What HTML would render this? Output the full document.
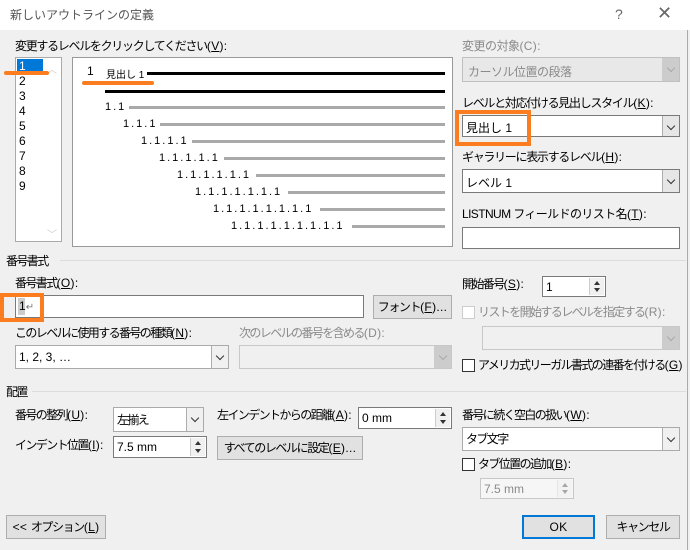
<!DOCTYPE html>
<html><head><meta charset="utf-8"><style>
*{box-sizing:border-box;margin:0;padding:0}
body{width:690px;height:550px;background:#f0f0f0;font-family:"Liberation Sans","Noto Sans CJK JP",sans-serif;font-size:12px;color:#000;position:relative;overflow:hidden}
.a{position:absolute;white-space:nowrap}
.t{line-height:14px;letter-spacing:-1.6px}
.n{letter-spacing:0.3px}
.g{color:#8a8a8a}
.box{position:absolute;background:#fff;border:1px solid #7a7a7a}
.dis{position:absolute;background:#f0f0f0;border:1px solid #c8c8c8}
.dd{position:absolute;right:0;top:0;bottom:0;width:17px;background:#e6e6e6;border-left:1px solid #adadad}
.dd:after{content:"";position:absolute;left:5px;top:7px;width:5px;height:5px;border-right:1px solid #333;border-bottom:1px solid #333;transform:rotate(45deg)}
.dis .dd{background:#ccc;border-left-color:#ccc}
.dis .dd:after{border-color:#aaa}
.btn{position:absolute;background:#e1e1e1;border:1px solid #adadad;text-align:center;white-space:nowrap;letter-spacing:-1.4px}
.spin{position:absolute;right:1px;top:1px;bottom:1px;width:15px;background:#f0f0f0;border-left:1px solid #ccc}
.spin:before{content:"";position:absolute;left:4px;top:3px;border:3px solid transparent;border-bottom:4px solid #333;border-top:0}
.spin:after{content:"";position:absolute;left:4px;bottom:3px;border:3px solid transparent;border-top:4px solid #333;border-bottom:0}
.cb{position:absolute;width:13px;height:13px;background:#fff;border:1px solid #333}
.or{position:absolute;border:4px solid #fb7d20}
.ol{position:absolute;background:#fb7d20;height:4px;border-radius:2px}
.bl{position:absolute;height:3px;background:#000}
.gl{position:absolute;height:3px;background:#a9a9a9;right:245px}
.pv{position:absolute;font-size:11px;line-height:12px;letter-spacing:2px}
</style></head><body>
<div class="a" style="left:0;top:0;width:690px;height:30px;background:#fff"></div>
<div class="a" style="left:10px;top:8px;color:#555;line-height:14px">新しいアウトラインの定義</div>
<div class="a" style="left:615px;top:6px;color:#666;font-size:14px">?</div>
<div class="a" style="left:657px;top:3px;color:#666;font-size:18px">✕</div>
<div class="a" style="left:687px;top:30px;width:1px;height:520px;background:#aaa"></div>

<div class="a t" style="left:15px;top:39px;letter-spacing:-1.3px">変更するレベルをクリックしてください<span class="n">(<u>V</u>):</span></div>
<div class="box" style="left:15px;top:57px;width:47px;height:185px;border-color:#aaa"></div>
<div class="a" style="left:17px;top:59px;width:26px;height:14px;background:#0078d7"></div>
<div class="a" style="left:19px;top:59px;line-height:15px;color:#fff">1</div>
<div class="a" style="left:19px;top:74px;line-height:15px">2<br>3<br>4<br>5<br>6<br>7<br>8<br>9</div>
<div class="a" style="left:47px;top:61px;color:#ccc;font-size:10px">︿</div>
<div class="a" style="left:47px;top:226px;color:#ccc;font-size:10px">﹀</div>

<div class="box" style="left:72px;top:57px;width:381px;height:190px;border-color:#999"></div>
<div class="a" style="left:87px;top:64px;font-size:12px">1</div>
<div class="a" style="left:106px;top:66px;font-size:10px">見出し 1</div>
<div class="bl" style="left:147px;top:72px;width:298px"></div>
<div class="bl" style="left:105px;top:90px;width:340px"></div>
<div class="pv" style="left:105px;top:101px">1.1</div><div class="gl" style="left:129px;top:106px"></div>
<div class="pv" style="left:123px;top:118px">1.1.1</div><div class="gl" style="left:160px;top:123px"></div>
<div class="pv" style="left:141px;top:135px">1.1.1.1</div><div class="gl" style="left:192px;top:140px"></div>
<div class="pv" style="left:159px;top:152px">1.1.1.1.1</div><div class="gl" style="left:224px;top:157px"></div>
<div class="pv" style="left:177px;top:169px">1.1.1.1.1.1</div><div class="gl" style="left:256px;top:174px"></div>
<div class="pv" style="left:195px;top:186px">1.1.1.1.1.1.1</div><div class="gl" style="left:288px;top:191px"></div>
<div class="pv" style="left:213px;top:203px">1.1.1.1.1.1.1.1</div><div class="gl" style="left:320px;top:208px"></div>
<div class="pv" style="left:231px;top:220px">1.1.1.1.1.1.1.1.1</div><div class="gl" style="left:352px;top:225px"></div>
<div class="ol" style="left:4px;top:71px;width:45px"></div>
<div class="ol" style="left:82px;top:81px;width:72px"></div>

<div class="a t g" style="left:462px;top:39px;letter-spacing:-0.5px">変更の対象<span class="n">(C):</span></div>
<div class="dis" style="left:462px;top:57px;width:218px;height:25px;background:#e8e8e8;border-color:#c0c0c0"><span class="a g" style="left:5px;top:5px;letter-spacing:-0.5px">カーソル位置の段落</span><div class="dd"></div></div>
<div class="a t" style="left:462px;top:96px;letter-spacing:-1.3px">レベルと対応付ける見出しスタイル<span class="n">(<u>K</u>):</span></div>
<div class="box" style="left:462px;top:115px;width:218px;height:22px"><span class="a" style="left:3px;top:3px">見出し 1</span><div class="dd"></div></div>
<div class="or" style="left:455px;top:110px;width:76px;height:36px"></div>
<div class="a t" style="left:462px;top:150px;letter-spacing:-1.3px">ギャラリーに表示するレベル<span class="n">(<u>H</u>):</span></div>
<div class="box" style="left:462px;top:169px;width:218px;height:24px"><span class="a" style="left:3px;top:4px">レベル 1</span><div class="dd"></div></div>
<div class="a t" style="left:462px;top:207px;letter-spacing:-0.6px">LISTNUM フィールドのリスト名<span class="n">(<u>T</u>):</span></div>
<div class="box" style="left:462px;top:227px;width:218px;height:22px"></div>

<div class="a t" style="left:6px;top:254px">番号書式</div>
<div class="a" style="left:60px;top:260px;width:626px;height:1px;background:#dcdcdc"></div>
<div class="a t" style="left:15px;top:276px">番号書式<span class="n">(<u>O</u>):</span></div>
<div class="box" style="left:15px;top:295px;width:349px;height:23px"><span class="a" style="left:2px;top:2px;background:#ccc;width:7px;height:17px"></span><span class="a" style="left:3px;top:3px">1<span style="color:#777;font-size:10px">↵</span></span></div>
<div class="or" style="left:0;top:293px;width:44px;height:29px"></div>
<div class="btn" style="left:373px;top:295px;width:79px;height:24px;line-height:22px">フォント<span class="n">(<u>F</u>)...</span></div>
<div class="a t" style="left:15px;top:326px">このレベルに使用する番号の種類<span class="n">(<u>N</u>):</span></div>
<div class="box" style="left:15px;top:345px;width:214px;height:24px;border-color:#aaa"><span class="a" style="left:3px;top:4px">1, 2, 3, …</span><div class="dd" style="background:#f0f0f0"></div></div>
<div class="a t g" style="left:239px;top:326px">次のレベルの番号を含める<span class="n">(D):</span></div>
<div class="dis" style="left:239px;top:345px;width:213px;height:24px"><div class="dd"></div></div>
<div class="a t" style="left:462px;top:277px">開始番号<span class="n">(<u>S</u>):</span></div>
<div class="box" style="left:542px;top:276px;width:64px;height:21px"><span class="a" style="left:3px;top:3px">1</span><div class="spin"></div></div>
<div class="cb" style="left:462px;top:306px;border-color:#ccc"></div>
<div class="a t g" style="left:478px;top:305px">リストを開始するレベルを指定する<span class="n">(R):</span></div>
<div class="dis" style="left:482px;top:326px;width:198px;height:24px"><div class="dd"></div></div>
<div class="cb" style="left:462px;top:359px"></div>
<div class="a t" style="left:478px;top:358px">アメリカ式リーガル書式の連番を付ける<span class="n">(<u>G</u>)</span></div>

<div class="a t" style="left:6px;top:385px">配置</div>
<div class="a" style="left:32px;top:391px;width:654px;height:1px;background:#dcdcdc"></div>
<div class="a t" style="left:15px;top:408px">番号の整列<span class="n">(<u>U</u>):</span></div>
<div class="box" style="left:113px;top:407px;width:91px;height:25px;border-color:#aaa"><span class="a t" style="left:3px;top:5px">左揃え</span><div class="dd" style="background:#f0f0f0"></div></div>
<div class="a t" style="left:217px;top:408px">左インデントからの距離<span class="n">(<u>A</u>):</span></div>
<div class="box" style="left:358px;top:407px;width:94px;height:22px"><span class="a" style="left:3px;top:3px">0 mm</span><div class="spin"></div></div>
<div class="a t" style="left:15px;top:438px">インデント位置<span class="n">(<u>I</u>):</span></div>
<div class="box" style="left:113px;top:436px;width:94px;height:22px"><span class="a" style="left:3px;top:3px">7.5 mm</span><div class="spin"></div></div>
<div class="btn" style="left:217px;top:436px;width:146px;height:24px;line-height:22px">すべてのレベルに設定<span class="n">(<u>E</u>)...</span></div>
<div class="a t" style="left:462px;top:408px">番号に続く空白の扱い<span class="n">(<u>W</u>):</span></div>
<div class="box" style="left:462px;top:427px;width:218px;height:24px;border-color:#aaa"><span class="a t" style="left:3px;top:4px">タブ文字</span><div class="dd" style="background:#f0f0f0"></div></div>
<div class="cb" style="left:462px;top:458px"></div>
<div class="a t" style="left:478px;top:457px">タブ位置の追加<span class="n">(<u>B</u>):</span></div>
<div class="dis" style="left:480px;top:478px;width:94px;height:21px;background:#f6f6f6"><span class="a g" style="left:3px;top:3px">7.5 mm</span><div class="spin" style="opacity:.4"></div></div>

<div class="btn" style="left:6px;top:515px;width:100px;height:24px;line-height:22px"><span class="n">&lt;&lt; </span>オプション<span class="n">(<u>L</u>)</span></div>
<div class="btn" style="left:522px;top:515px;width:73px;height:24px;line-height:20px;border:2px solid #0078d7" ><span class="n">OK</span></div>
<div class="btn" style="left:606px;top:515px;width:74px;height:24px;line-height:22px">キャンセル</div>
</body></html>
